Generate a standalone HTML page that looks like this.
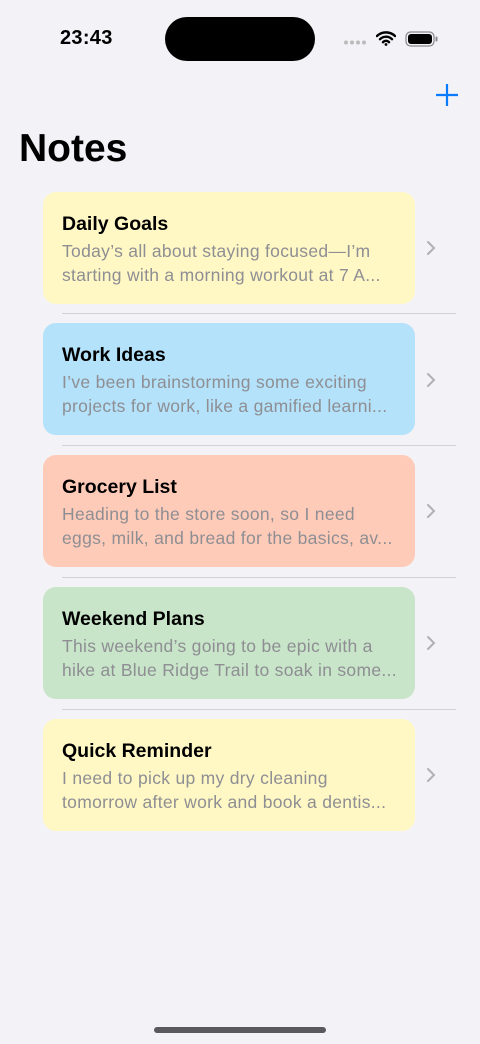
<!DOCTYPE html>
<html><head><meta charset="utf-8"><style>
*{margin:0;padding:0;box-sizing:border-box}
body{width:480px;height:1044px;background:#f2f2f7;font-family:"Liberation Sans",sans-serif;position:relative;overflow:hidden}
.time{position:absolute;left:60px;top:27px;font-size:20px;font-weight:bold;color:#000;letter-spacing:0.3px}
.island{position:absolute;left:165px;top:17px;width:150px;height:44px;background:#000;border-radius:22px}
.title{position:absolute;left:19px;top:127px;font-size:39px;font-weight:bold;color:#000}
.card{position:absolute;left:43px;width:372px;height:112px;border-radius:13px;padding:19px 19px 0 19px}
.card h2{font-size:19.5px;font-weight:bold;color:#000;line-height:24px;margin-top:1px}
.card p{font-size:17.5px;letter-spacing:0.3px;color:#8e8e93;line-height:24px;margin-top:3px;white-space:nowrap;overflow:hidden}
.chev{position:absolute;left:426px}
.sep{position:absolute;left:62px;width:394px;height:1px;background:#d1d1d6}
.home{position:absolute;left:154px;top:1027px;width:172px;height:6px;border-radius:3px;background:#5a5a5e}
</style></head><body>
<div class="time">23:43</div>
<div class="island"></div>
<svg style="position:absolute;left:344px;top:40px" width="24" height="5"><g fill="#bbb"><circle cx="2" cy="2.5" r="2"/><circle cx="8" cy="2.5" r="2"/><circle cx="14" cy="2.5" r="2"/><circle cx="20" cy="2.5" r="2"/></g></svg>
<svg style="position:absolute;left:376px;top:30px" width="20" height="16" viewBox="0 0 20 16"><path d="M1 6a13 13 0 0 1 18 0M4 9.2a8.5 8.5 0 0 1 12 0M7 12.2a4 4 0 0 1 6 0" stroke="#000" stroke-width="2.4" fill="none" stroke-linecap="round"/><circle cx="10" cy="14.5" r="1.4"/></svg>
<svg style="position:absolute;left:405px;top:31px" width="34" height="16" viewBox="0 0 34 16"><rect x="1" y="1" width="28" height="14" rx="4.5" fill="none" stroke="#888" stroke-width="1.2"/><rect x="3" y="3" width="24" height="10" rx="3" fill="#000"/><rect x="30.5" y="5.5" width="2" height="5" rx="1" fill="#888"/></svg>
<svg style="position:absolute;left:435px;top:83px" width="24" height="24"><path d="M12 1v22M1 12h22" stroke="#0a7aff" stroke-width="2.2"/></svg>
<div class="title">Notes</div>

<div class="card" style="top:192px;background:#fff8c5"><h2>Daily Goals</h2><p>Today’s all about staying focused—I’m<br>starting with a morning workout at 7 A...</p></div>
<div class="sep" style="top:313px"></div>
<div class="card" style="top:323px;background:#b3e2fa"><h2>Work Ideas</h2><p>I’ve been brainstorming some exciting<br>projects for work, like a gamified learni...</p></div>
<div class="sep" style="top:445px"></div>
<div class="card" style="top:455px;background:#ffcbb9"><h2>Grocery List</h2><p>Heading to the store soon, so I need<br>eggs, milk, and bread for the basics, av...</p></div>
<div class="sep" style="top:577px"></div>
<div class="card" style="top:587px;background:#c8e5c9"><h2>Weekend Plans</h2><p>This weekend’s going to be epic with a<br>hike at Blue Ridge Trail to soak in some...</p></div>
<div class="sep" style="top:709px"></div>
<div class="card" style="top:719px;background:#fff8c5"><h2>Quick Reminder</h2><p>I need to pick up my dry cleaning<br>tomorrow after work and book a dentis...</p></div>

<svg class="chev" style="top:240px" width="10" height="16"><path d="M2 2l6 6-6 6" stroke="#b0b0b5" stroke-width="2" fill="none" stroke-linecap="round"/></svg>
<svg class="chev" style="top:372px" width="10" height="16"><path d="M2 2l6 6-6 6" stroke="#b0b0b5" stroke-width="2" fill="none" stroke-linecap="round"/></svg>
<svg class="chev" style="top:503px" width="10" height="16"><path d="M2 2l6 6-6 6" stroke="#b0b0b5" stroke-width="2" fill="none" stroke-linecap="round"/></svg>
<svg class="chev" style="top:635px" width="10" height="16"><path d="M2 2l6 6-6 6" stroke="#b0b0b5" stroke-width="2" fill="none" stroke-linecap="round"/></svg>
<svg class="chev" style="top:767px" width="10" height="16"><path d="M2 2l6 6-6 6" stroke="#b0b0b5" stroke-width="2" fill="none" stroke-linecap="round"/></svg>
<div class="home"></div>
</body></html>
